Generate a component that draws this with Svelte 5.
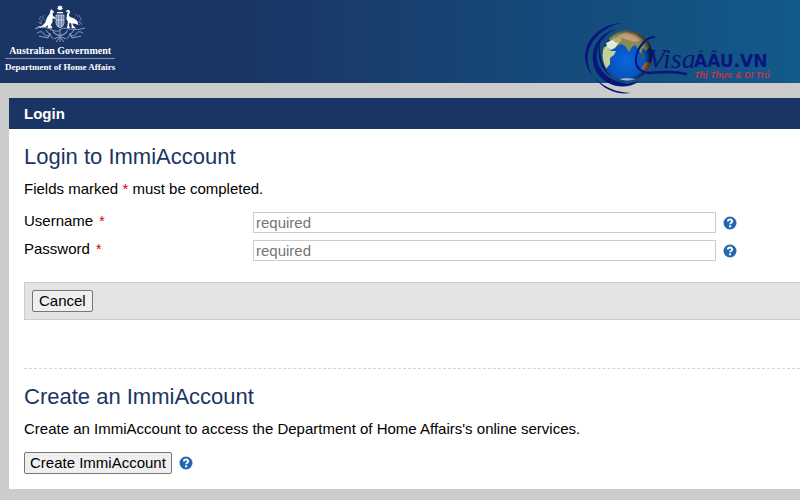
<script lang="ts">
  interface Field {
    id: string;
    label: string;
    type: 'text' | 'password';
  }

  const fields: Field[] = [
    { id: 'username', label: 'Username', type: 'text' },
    { id: 'password', label: 'Password', type: 'password' }
  ];

  let values: Record<string, string> = $state({ username: '', password: '' });

  function cancel() {
    values = { username: '', password: '' };
  }
</script>

{#snippet help(label: string)}
  <button type="button" class="help" aria-label={label}>
    <svg viewBox="0 0 14 14" width="14" height="14" aria-hidden="true">
      <circle cx="7" cy="7" r="6.5" fill="#2168ae" />
      <path d="M4.9 5.5C4.9 2.8 9.2 2.9 9.2 5.3C9.2 6.7 7.1 6.7 7.1 8.3" fill="none" stroke="#fff" stroke-width="1.9" />
      <rect x="6.1" y="9.3" width="2" height="2" fill="#fff" />
    </svg>
  </button>
{/snippet}

<header class="banner">
  <div class="department">
    <svg class="crest" viewBox="0 0 60 40" width="60" height="40" aria-hidden="true">
      <g fill="#fff">
        <path d="M30 0L30.8 1.4L32.4 1L31.9 2.5L33 3.6L31.5 4.2L31.2 5.6L30 4.8L28.8 5.6L28.5 4.2L27 3.6L28.1 2.5L27.6 1L29.2 1.4Z" />
        <path d="M27 7H33V8.3H27Z" />
        <path d="M21 4L22.3 5.3L24 6.4L23.8 7.6L22.5 8L23 11L25.7 12.8L25.3 14L22.6 13.3L22.5 17L20.8 20L22.6 23.2H17.6L18 20L15.5 22L10 23L6 22.3L12 20.7L15 18L17 12.6L19.8 8.6L20.2 6.4Z" />
        <path d="M38 6.6L36 7L36.4 5.4L38.4 4.7L40 6L39.6 8.4L38.8 10.4L40.5 12.2L44.4 13.4L47.5 16.2L48.3 20L45 18.7L42.5 18.4L43 20.5L46 23.2H41.8L41.3 18.5L39.5 17.7L39 20.6L40 23.2H37L38 17L36.4 14L36.8 10Z" />
      </g>
      <path d="M26 10H34V18Q34 21 30 23Q26 21 26 18Z" fill="#7183a9" />
      <g fill="none" stroke="#dde3ee" stroke-width=".7">
        <path d="M26 10H34V18Q34 21 30 23Q26 21 26 18ZM28.7 10V22M31.4 10V22M26 15H34" />
      </g>
      <g fill="none" stroke="#8c9cbd" stroke-width="1">
        <path d="M5 24Q12 20 20 24T30 25T40 24T55 23" />
        <path d="M7 28Q12 25 14 29T21 29M53 28Q48 25 46 29T39 29M16 25L23 34M44 25L37 34M22 25Q28 35 37 27M38 25Q32 35 23 27M30 24V37M24 34Q30 30 36 34M9 31L18 33L20 28M51 31L42 33L40 28M26 37L30 32L34 37" />
        <path d="M11 11L9 14L12 16L10 19M49 10L51 14L49 17L52 20M8 17L12 19M52 17L49 20M14 10L12 13L15 15M46 9L48 12" opacity=".6" />
      </g>
    </svg>
    <span class="government">Australian Government</span>
    <span class="home-affairs">Department of Home Affairs</span>
  </div>

  <!-- agency logo hangs over the lower edge of the banner -->
  <svg class="agency" viewBox="0 0 190 76" width="190" height="76" role="img" aria-label="Visa ÁÂU.VN">
    <defs>
      <radialGradient id="sea" cx=".48" cy=".6" r=".6">
        <stop offset="0" stop-color="#0a66dc" />
        <stop offset=".6" stop-color="#0754bd" />
        <stop offset="1" stop-color="#07204f" />
      </radialGradient>
      <radialGradient id="shade" cx=".42" cy=".52" r=".58">
        <stop offset=".75" stop-color="#001" stop-opacity="0" />
        <stop offset="1" stop-color="#001" stop-opacity=".75" />
      </radialGradient>
      <clipPath id="disc"><circle cx="47.5" cy="35.5" r="25" /></clipPath>
    </defs>
    <g clip-path="url(#disc)">
      <circle cx="47.5" cy="35.5" r="25" fill="url(#sea)" />
      <path d="M28 18L34 12L44 9L57 11L67 19L70 27L66 31L63 28L61 34L58 29L55 25L52 27L49 32L45 26L41 24L36 27L32 24Z" fill="#858b55" />
      <path d="M38 16L46 12L56 14L63 20L54 22L45 19Z" fill="#c69b76" />
      <path d="M22 28L27 26L31 31L36 31L34 35L30 38L30 44L26 49L22 41Z" fill="#c3cf94" />
      <path d="M26 23L32 20L39 22L35 28L31 30L27 27Z" fill="#e3ead9" />
      <path d="M32 19L40 16L42 21L36 23Z" fill="#b9a878" />
      <path d="M62 47L66 42L72 43L70 53L62 51Z" fill="#a66a4b" />
      <path d="M60 33L62 33L65 38L63 39Z" fill="#47603e" />
      <path d="M39 59Q47 57.5 56 59L52 61H43Z" fill="#ccd4df" />
      <circle cx="47.5" cy="35.5" r="25" fill="url(#shade)" />
    </g>
    <g fill="#08157b">
      <path d="M42 3C19 4 1 23 6 43C7 48 9 52 12 55C10 51 8.500 47 8 43C5 24 21 7 42 3Z" />
      <path d="M36 9C15 14 7 36 17 53C26 67 47 71 59 61C46 66 31 62 22 51C11 36 18 17 36 9Z" />
      <path d="M20 22C16 35 20 48 31 57C23 47 19 36 20 22Z" />
      <path d="M15 58C24 70 37 75 51 73C37 72.500 25 68 15 58Z" />
    </g>
    <g fill="none" stroke="#08157b" stroke-linecap="round">
      <path d="M74 17C66 17 57 28 56 38C55 48 61 53 72 53" stroke-width="2" />
      <path d="M68 53C82 52 94 51 106 54" stroke-width="2.5" />
    </g>
    <text class="script" x="68" y="48">Visa</text>
    <text class="name" x="114" y="47">ÁÂU.VN</text>
    <text class="tagline" x="114" y="58">Thị Thực &amp; DI Trú</text>
  </svg>
</header>

<main>
  <h1>Login</h1>

  <form onsubmit={(e) => e.preventDefault()}>
    <h2>Login to ImmiAccount</h2>
    <p>Fields marked <span class="star">*</span> must be completed.</p>

    <div class="fields">
      {#each fields as field (field.id)}
        <div class="field">
          <label for={field.id}>{field.label} <span class="star">*</span></label>
          <input id={field.id} type={field.type} placeholder="required" bind:value={values[field.id]} />
          {@render help(`Help for ${field.label}`)}
        </div>
      {/each}
    </div>

    <div class="actions">
      <button type="button" class="push" onclick={cancel}>Cancel</button>
    </div>
  </form>

  <section>
    <h2>Create an ImmiAccount</h2>
    <p>Create an ImmiAccount to access the Department of Home Affairs's online services.</p>
    <div class="create">
      <button type="button" class="push">Create ImmiAccount</button>
      {@render help('Help for creating an account')}
    </div>
  </section>
</main>

<style>
  :global(body) {
    background: #ccc;
  }

  .banner {
    position: relative;
    box-sizing: border-box;
    height: 83px;
    padding: 5px;
    background: linear-gradient(90deg, #1a3564 30%, #115a8b);
  }

  .department {
    display: inline-flex;
    flex-direction: column;
    align-items: center;
    color: #fff;
    font-family: 'Liberation Serif', 'Times New Roman', serif;
    font-weight: bold;
    white-space: nowrap;
  }

  .government {
    font-size: 10px;
    line-height: 12px;
  }

  .home-affairs {
    margin-top: 1px;
    padding-top: 2px;
    border-top: 1px solid #8190ad;
    font-size: 9px;
    line-height: 12px;
  }

  .agency {
    position: absolute;
    top: 20px;
    right: 30px;
  }

  .script {
    fill: #08157b;
    font: italic 28px 'Liberation Serif', serif;
  }

  .name {
    fill: #08157b;
    font: bold 17px 'DejaVu Sans', sans-serif;
  }

  .tagline {
    fill: #c5344d;
    font: italic bold 9px 'Liberation Sans', sans-serif;
  }

  main {
    margin: 15px 0 11px 9px;
    padding-bottom: 15px;
    background: #fff;
    color: #000;
    font: 15px/18px 'Liberation Sans', Arial, sans-serif;
  }

  h1 {
    margin: 0;
    padding: 7px 15px 6px;
    background: #1a3564;
    color: #fff;
    font-size: 15px;
    line-height: 18px;
  }

  form,
  section {
    margin-left: 15px;
  }

  form {
    padding-top: 14px;
  }

  h2 {
    margin: 0;
    color: #1a3564;
    font-size: 22px;
    font-weight: normal;
    line-height: 28px;
  }

  p {
    margin: 9px 0 0;
  }

  .star {
    color: #c00;
  }

  .fields {
    display: flex;
    flex-direction: column;
    gap: 7px;
    margin-top: 14px;
  }

  .field {
    display: flex;
    align-items: center;
    padding-right: 63px;
  }

  label {
    flex: 0 0 229px;
    align-self: flex-start;
  }

  label .star {
    margin-left: 2px;
    font-size: 14px;
  }

  input {
    flex: 1;
    box-sizing: border-box;
    min-width: 0;
    height: 21px;
    padding: 0 2px;
    border: 1px solid #ccc;
    background: #fff;
    font: inherit;
  }

  input::placeholder {
    color: #757575;
  }

  .help {
    display: flex;
    margin-left: 7px;
    padding: 0;
    border: 0;
    background: none;
    cursor: pointer;
  }

  .actions {
    margin-top: 21px;
    padding: 7px;
    border: 1px solid #ccc;
    border-right: 0;
    background: #e3e3e3;
  }

  .push {
    display: block;
    box-sizing: border-box;
    height: 22px;
    padding: 0 6px;
    border: 1px solid #767676;
    border-radius: 2px;
    background: #efefef;
    color: #000;
    font: inherit;
  }

  section {
    margin-top: 48px;
    padding-top: 14px;
    border-top: 1px dashed #d5d5d5;
  }

  .create {
    display: flex;
    align-items: center;
    margin-top: 14px;
  }

  .create .push {
    padding: 0 5px;
  }
</style>
